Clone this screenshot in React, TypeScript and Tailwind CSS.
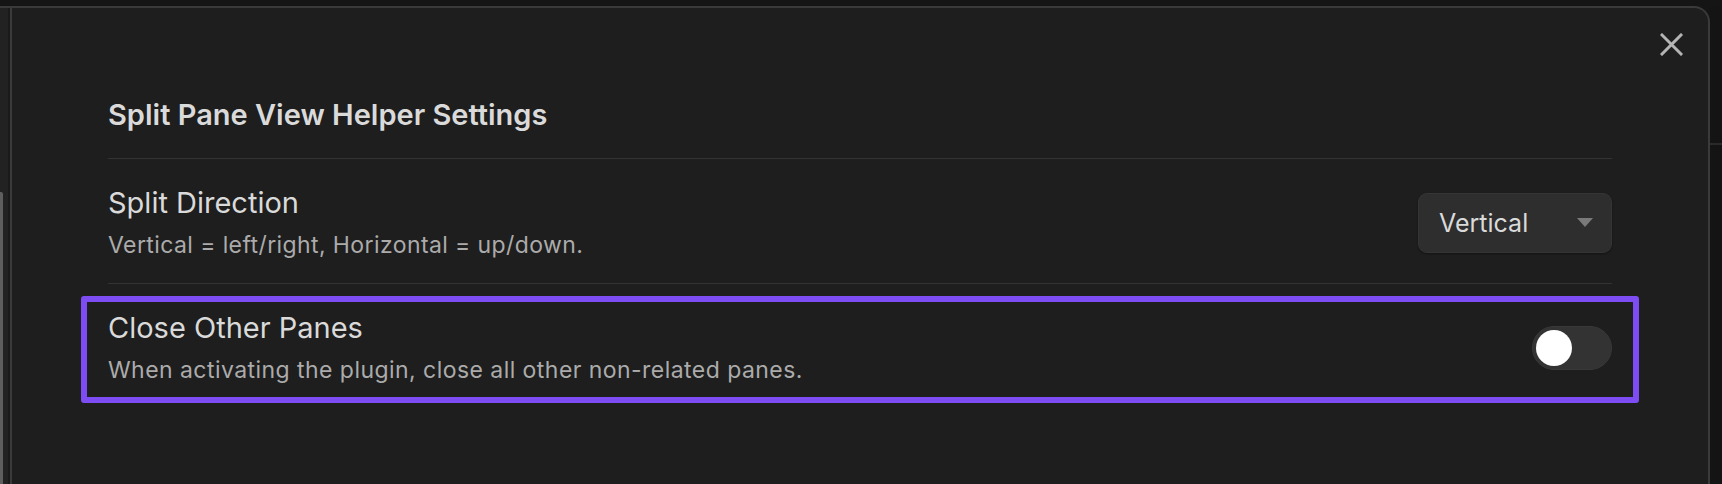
import React from "react";

function Toggle() {
  return (
    <div className="w-[80px] h-[44px] rounded-full bg-[#333333] border border-[#383838] p-[3px] flex items-center">
      <div className="w-[36px] h-[36px] rounded-full bg-white" />
    </div>
  );
}

function Dropdown() {
  return (
    <div className="w-[194px] h-[60px] rounded-[9px] bg-[#2e2e2e] border border-[#353535] shadow-[0_1px_2px_rgba(0,0,0,0.4)] flex items-center justify-between pl-[20px] pr-[17px]">
      <span className="text-[25px] leading-[30px] text-[#dadada]">Vertical</span>
      <svg width="18" height="11" viewBox="0 0 18 11">
        <path d="M1 1 L17 1 L9 10 Z" fill="#7a7a7a" />
      </svg>
    </div>
  );
}

export default function App() {
  return (
    <div
      className="w-[1722px] h-[484px] bg-[#151515] overflow-hidden flex flex-col"
      style={{ fontFamily: "Inter, 'Noto Sans', sans-serif" }}
    >
      <div className="h-[6px] shrink-0" />
      <div className="flex flex-1">
        {/* Modal */}
        <div className="relative w-[1710px] border-t-2 border-r-2 border-[#3a3a3a] rounded-tr-[16px] bg-[#1e1e1e] flex">
          {/* left strip */}
          <div className="w-[8px] bg-[#222222] flex flex-col">
            <div className="mt-[184px] w-[3px] flex-1 rounded-tr-[2px] bg-[#5e5e5e]" />
          </div>
          <div className="w-[2px] bg-[#1a1a1a]" />
          <div className="w-[2px] bg-[#3a3a3a]" />
          {/* content */}
          <div className="flex-1 px-[96px] pt-[89px]">
            <div className="text-[29px] leading-[36px] font-semibold text-[#dadada]">
              Split Pane View Helper Settings
            </div>
            <div className="mt-[25px] border-t border-[#333333] pt-[26px] pb-[23px] flex items-center justify-between">
              <div>
                <div className="text-[29px] leading-[36px] text-[#dadada]">Split Direction</div>
                <div className="mt-[9px] text-[23px] leading-[30px] tracking-[0.4px] text-[#ababab]">
                  Vertical = left/right, Horizontal = up/down.
                </div>
              </div>
              <Dropdown />
            </div>
            <div className="relative border-t border-[#333333] pt-[26px] pb-[23px] flex items-center justify-between">
              <div>
                <div className="text-[29px] leading-[36px] text-[#dadada]">Close Other Panes</div>
                <div className="mt-[9px] text-[23px] leading-[30px] tracking-[0.45px] text-[#ababab]">
                  When activating the plugin, close all other non-related panes.
                </div>
              </div>
              <Toggle />
              <div className="absolute top-[12px] bottom-[5px] -left-[27px] -right-[27px] border-[6px] border-[#7d4cf2] rounded-[3px] pointer-events-none" />
            </div>
          </div>
          {/* close button */}
          <div className="absolute left-[1660px] top-[25px] w-[23px] h-[23px]">
            <svg width="23" height="23" viewBox="0 0 23 23">
              <path d="M2 2 L21 21 M21 2 L2 21" stroke="#b4b4b4" strokeWidth="3" strokeLinecap="square" />
            </svg>
          </div>
        </div>
        {/* outside right */}
        <div className="flex-1 bg-[#141414]">
          <div className="mt-[137px] h-[2px] bg-[#2a2a2a]" />
        </div>
      </div>
    </div>
  );
}
